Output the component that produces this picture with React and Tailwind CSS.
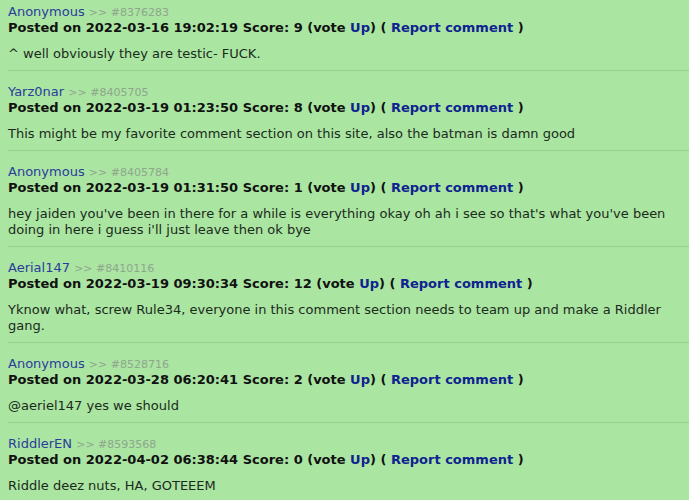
import React from 'react';

const comments = [
  { user: 'Anonymous', id: '8376283', date: '2022-03-16 19:02:19', score: 9, text: '^ well obviously they are testic- FUCK.' },
  { user: 'Yarz0nar', id: '8405705', date: '2022-03-19 01:23:50', score: 8, text: 'This might be my favorite comment section on this site, also the batman is damn good' },
  { user: 'Anonymous', id: '8405784', date: '2022-03-19 01:31:50', score: 1, text: "hey jaiden you've been in there for a while is everything okay oh ah i see so that's what you've been doing in here i guess i'll just leave then ok bye" },
  { user: 'Aerial147', id: '8410116', date: '2022-03-19 09:30:34', score: 12, text: 'Yknow what, screw Rule34, everyone in this comment section needs to team up and make a Riddler gang.' },
  { user: 'Anonymous', id: '8528716', date: '2022-03-28 06:20:41', score: 2, text: '@aeriel147 yes we should' },
  { user: 'RiddlerEN', id: '8593568', date: '2022-04-02 06:38:44', score: 0, text: 'Riddle deez nuts, HA, GOTEEEM' },
];

const Comment = ({ c }) => (
  <div className="ml-2 pt-[13px] pb-2 border-b border-[#95d08e]">
    <div className="h-4 leading-4 text-[13px]">
      <a className="text-[#2a3c9c]">{c.user}</a>{' '}
      <span className="text-[11px] leading-none text-[#8fa58c]">&gt;&gt; #{c.id}</span>
    </div>
    <div className="leading-4 text-[13px] font-bold text-[#111]">
      Posted on {c.date} Score: {c.score} (vote <a className="text-[#0f2290]">Up</a>) ({' '}
      <a className="text-[#0f2290]">Report comment</a> )
    </div>
    <p className="mt-[10px] leading-4 text-[13px] text-[#1c2a1c] pr-2">{c.text}</p>
  </div>
);

export default function App() {
  return (
    <div className="min-h-screen bg-[#aae5a2] overflow-hidden" style={{ fontFamily: '"DejaVu Sans", Verdana, sans-serif' }}>
      <div className="-mt-[9px]">
        {comments.map(c => (
          <Comment key={c.id} c={c} />
        ))}
      </div>
    </div>
  );
}
